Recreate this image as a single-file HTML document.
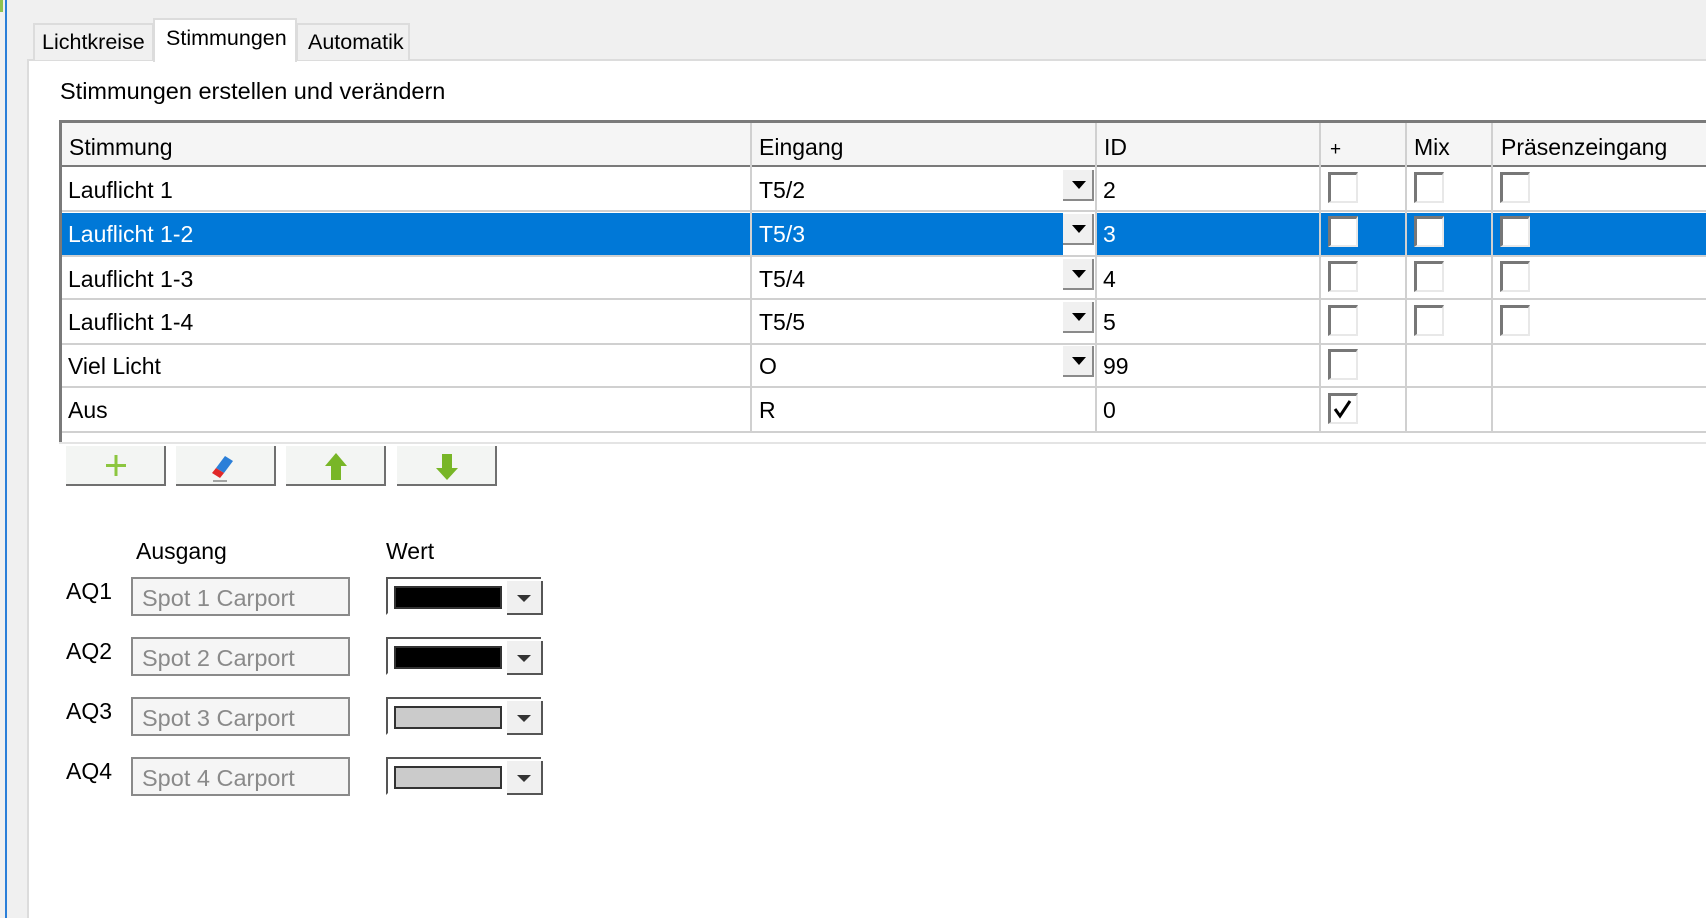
<!DOCTYPE html>
<html><head><meta charset="utf-8"><style>
*{margin:0;padding:0;box-sizing:border-box}
body{width:1706px;height:918px;background:#f0f0f0;position:relative;overflow:hidden;font-family:"Liberation Sans",sans-serif;font-size:23px;color:#000}
.a{position:absolute}
.t{position:absolute;white-space:nowrap;line-height:1}
.hl{position:absolute;height:2px;background:#d0d0d0}
.vl{position:absolute;width:2px;background:#d0d0d0}
.dd{position:absolute;width:31px;height:31px;background:#f0f0f0;border-right:2px solid #8a8a8a;border-bottom:2px solid #8a8a8a}
.dd:after{content:"";position:absolute;left:9px;top:11px;border-left:7px solid transparent;border-right:7px solid transparent;border-top:8px solid #000}
.cb{position:absolute;width:30px;height:31px;background:#fff;border-top:3px solid #777;border-left:3px solid #777;border-right:2px solid #e8e8e8;border-bottom:2px solid #e8e8e8}
.btn{position:absolute;top:446px;width:100px;height:40px;background:#f3f5f3;border-right:2px solid #707070;border-bottom:2px solid #707070}
.tb{position:absolute;left:131px;width:219px;height:39px;background:#f5f5f5;border:2px solid #8a8a8a;color:#8a8a8a;padding:6px 0 0 9px;font-size:23.5px}
.cc{position:absolute;left:386px;width:155px;height:38px;background:#fff;border:2px solid #555;border-bottom-color:#fff;border-right:none}
.cc .sw{position:absolute;left:6px;top:7px;width:108px;height:23px;border:2px solid #333}
.cc .ar{position:absolute;left:119px;top:2px;width:36px;height:34px;background:#f0f0f0;border-right:2px solid #555;border-bottom:2px solid #555}
.cc .ar:after{content:"";position:absolute;left:10px;top:14px;border-left:7px solid transparent;border-right:7px solid transparent;border-top:7px solid #333}
</style></head><body>
<div class="a" style="left:5px;top:0;width:2px;height:918px;background:#2b7fd8"></div>
<div class="a" style="left:0;top:0;width:3px;height:12px;background:#8fc24f"></div>
<!-- panel -->
<div class="a" style="left:27px;top:59px;width:1679px;height:859px;background:#fff;border-left:2px solid #dcdcdc;border-top:2px solid #dcdcdc"></div>
<!-- tabs -->
<div class="a" style="left:33px;top:23px;width:121px;height:37px;background:#f0f0f0;border:2px solid #dcdcdc;border-bottom:none"></div>
<div class="t" style="left:42px;top:32px;font-size:21.5px">Lichtkreise</div>
<div class="a" style="left:296px;top:23px;width:114px;height:37px;background:#f0f0f0;border:2px solid #dcdcdc;border-bottom:none"></div>
<div class="t" style="left:308px;top:32px;font-size:21.5px">Automatik</div>
<div class="a" style="left:153px;top:18px;width:144px;height:44px;background:#fff;border:2px solid #dcdcdc;border-bottom:none"></div>
<div class="t" style="left:166px;top:28px;font-size:21.5px">Stimmungen</div>
<div class="t" style="left:60px;top:80px;font-size:23.5px">Stimmungen erstellen und verändern</div>
<!-- table -->
<div class="a" style="left:59px;top:120px;width:1647px;height:324px;background:#fff;border-top:3px solid #7a7a7a;border-left:3px solid #7a7a7a"></div>
<div class="a" style="left:62px;top:123px;width:1644px;height:44px;background:#f5f5f5"></div>
<div class="a" style="left:62px;top:165px;width:1644px;height:2px;background:#7a7a7a"></div>
<div class="a" style="left:62px;top:213px;width:1644px;height:42px;background:#0078d7"></div>
<div class="vl" style="left:750px;top:123px;height:309px"></div>
<div class="vl" style="left:1095px;top:123px;height:309px"></div>
<div class="vl" style="left:1319px;top:123px;height:309px"></div>
<div class="vl" style="left:1405px;top:123px;height:309px"></div>
<div class="vl" style="left:1491px;top:123px;height:309px"></div>
<div class="hl" style="left:62px;top:210px;width:1644px"></div>
<div class="hl" style="left:62px;top:255px;width:1644px"></div>
<div class="hl" style="left:62px;top:298px;width:1644px"></div>
<div class="hl" style="left:62px;top:343px;width:1644px"></div>
<div class="hl" style="left:62px;top:386px;width:1644px"></div>
<div class="hl" style="left:62px;top:431px;width:1644px"></div>
<div class="a" style="left:59px;top:442px;width:1647px;height:2px;background:#e4e4e4"></div>
<div class="t" style="left:69px;top:136px">Stimmung</div>
<div class="t" style="left:759px;top:136px">Eingang</div>
<div class="t" style="left:1104px;top:136px">ID</div>
<div class="t" style="left:1330px;top:140px;font-size:19px">+</div>
<div class="t" style="left:1414px;top:136px">Mix</div>
<div class="t" style="left:1501px;top:136px">Präsenzeingang</div>
<!-- rows -->
<div class="t" style="left:68px;top:179px">Lauflicht 1</div>
<div class="t" style="left:68px;top:223px;color:#fff">Lauflicht 1-2</div>
<div class="t" style="left:68px;top:268px">Lauflicht 1-3</div>
<div class="t" style="left:68px;top:311px">Lauflicht 1-4</div>
<div class="t" style="left:68px;top:355px">Viel Licht</div>
<div class="t" style="left:68px;top:399px">Aus</div>
<div class="t" style="left:759px;top:179px">T5/2</div>
<div class="t" style="left:759px;top:223px;color:#fff">T5/3</div>
<div class="t" style="left:759px;top:268px">T5/4</div>
<div class="t" style="left:759px;top:311px">T5/5</div>
<div class="t" style="left:759px;top:355px">O</div>
<div class="t" style="left:759px;top:399px">R</div>
<div class="t" style="left:1103px;top:179px">2</div>
<div class="t" style="left:1103px;top:223px;color:#fff">3</div>
<div class="t" style="left:1103px;top:268px">4</div>
<div class="t" style="left:1103px;top:311px">5</div>
<div class="t" style="left:1103px;top:355px">99</div>
<div class="t" style="left:1103px;top:399px">0</div>
<div class="a" style="left:1063px;top:213px;width:32px;height:42px;background:#fff"></div>
<div class="dd" style="left:1063px;top:170px"></div>
<div class="dd" style="left:1063px;top:214px"></div>
<div class="dd" style="left:1063px;top:259px"></div>
<div class="dd" style="left:1063px;top:302px"></div>
<div class="dd" style="left:1063px;top:346px"></div>
<!-- checkboxes -->
<div class="cb" style="left:1328px;top:172px"></div><div class="cb" style="left:1414px;top:172px"></div><div class="cb" style="left:1500px;top:172px"></div>
<div class="cb" style="left:1328px;top:216px"></div><div class="cb" style="left:1414px;top:216px"></div><div class="cb" style="left:1500px;top:216px"></div>
<div class="cb" style="left:1328px;top:261px"></div><div class="cb" style="left:1414px;top:261px"></div><div class="cb" style="left:1500px;top:261px"></div>
<div class="cb" style="left:1328px;top:305px"></div><div class="cb" style="left:1414px;top:305px"></div><div class="cb" style="left:1500px;top:305px"></div>
<div class="cb" style="left:1328px;top:349px"></div>
<div class="cb" style="left:1328px;top:393px"><svg width="26" height="26" style="position:absolute;left:0;top:0"><path d="M4 13 L9 20 L19 5" stroke="#000" stroke-width="3" fill="none"/></svg></div>
<!-- buttons -->
<div class="btn" style="left:66px"><svg width="100" height="40" style="position:absolute;left:0;top:0"><path d="M50 9v21M40 19.5h20" stroke="#8cc63f" stroke-width="3"/></svg></div>
<div class="btn" style="left:176px"><svg width="100" height="40" style="position:absolute;left:0;top:0"><path d="M40 22 L49 10 L57 15 L48 27 Z" fill="#2b7fd8"/><path d="M40 22 L48 27 L44 32 L36 27 Z" fill="#e02828"/><path d="M37 35h14" stroke="#888" stroke-width="1.5"/></svg></div>
<div class="btn" style="left:286px"><svg width="100" height="40" style="position:absolute;left:0;top:0"><path d="M50 7 L61 20 L55 20 L55 34 L45 34 L45 20 L39 20 Z" fill="#78b627"/></svg></div>
<div class="btn" style="left:397px"><svg width="100" height="40" style="position:absolute;left:0;top:0"><path d="M50 34 L61 22 L55 22 L55 8 L45 8 L45 22 L39 22 Z" fill="#78b627"/></svg></div>
<!-- outputs -->
<div class="t" style="left:136px;top:540px">Ausgang</div>
<div class="t" style="left:386px;top:540px">Wert</div>
<div class="t" style="left:66px;top:580px">AQ1</div>
<div class="t" style="left:66px;top:640px">AQ2</div>
<div class="t" style="left:66px;top:700px">AQ3</div>
<div class="t" style="left:66px;top:760px">AQ4</div>
<div class="tb" style="top:577px">Spot 1 Carport</div>
<div class="tb" style="top:637px">Spot 2 Carport</div>
<div class="tb" style="top:697px">Spot 3 Carport</div>
<div class="tb" style="top:757px">Spot 4 Carport</div>
<div class="cc" style="top:577px"><div class="sw" style="background:#000"></div><div class="ar"></div></div>
<div class="cc" style="top:637px"><div class="sw" style="background:#000"></div><div class="ar"></div></div>
<div class="cc" style="top:697px"><div class="sw" style="background:#cbcbcb"></div><div class="ar"></div></div>
<div class="cc" style="top:757px"><div class="sw" style="background:#cbcbcb"></div><div class="ar"></div></div>
</body></html>
